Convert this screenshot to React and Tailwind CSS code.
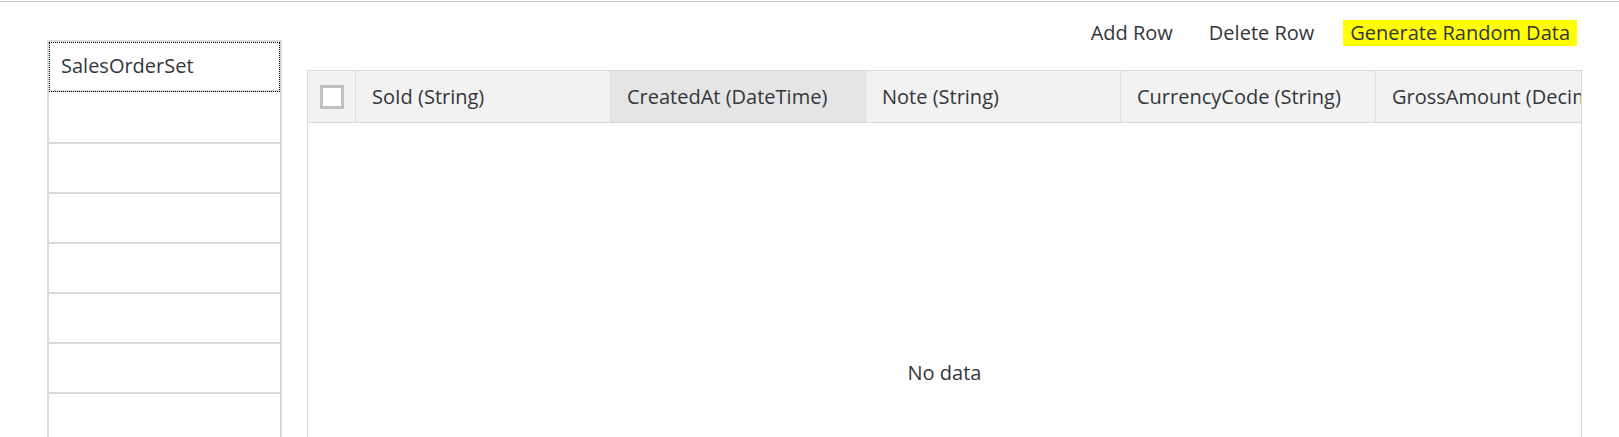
const COLUMNS = [
  { label: 'SoId (String)' },
  { label: 'CreatedAt (DateTime)', hover: true },
  { label: 'Note (String)' },
  { label: 'CurrencyCode (String)' },
  { label: 'GrossAmount (Decimal)' },
]

const ENTITY_SETS = ['SalesOrderSet', '', '', '', '', '', '', '', '']

export default function App() {
  return (
    <div
      className="h-[437px] overflow-hidden bg-white text-[20px] text-[#32363a]"
      style={{ fontFamily: '"Open Sans", "Noto Sans", Arial, sans-serif' }}
    >
      <div className="mt-px h-px bg-[#c6c6c6]" />

      <div className="flex pl-[47px]">
        {/* entity sets */}
        <div className="mt-[38px] w-[235px] shrink-0 border-2 border-[#d9d9d9]">
          {ENTITY_SETS.map((name, i) => (
            <div
              key={i}
              className={`h-[50px] border-b-2 border-[#d9d9d9] pl-[12px] flex items-center ${
                i === 0 ? 'h-[48px] border-b-0 outline-1 outline-dotted outline-black -outline-offset-1 mb-[2px]' : ''
              }`}
            >
              {name}
            </div>
          ))}
        </div>

        <div className="ml-[25px] w-[1275px] shrink-0">
          <div className="mt-[18px] flex items-center justify-end pr-[5px] leading-[26px]">
            <button type="button" className="mr-[36px]">Add Row</button>
            <button type="button" className="mr-[29px]">Delete Row</button>
            <button type="button" className="bg-[#ffff00] px-[7px]">Generate Random Data</button>
          </div>

          <div className="mt-[24px] border border-[#d9d9d9]">
            <div className="flex h-[52px] border-b border-[#d9d9d9] bg-[#f2f2f2] overflow-hidden">
              <div className="w-[48px] shrink-0 border-r border-[#dcdcdc] flex items-center justify-center">
                <div className="w-[24px] h-[24px] border-[3px] border-[#c0c0c0] bg-white" />
              </div>
              {COLUMNS.map((col) => (
                <div
                  key={col.label}
                  className={`w-[255px] shrink-0 border-r border-[#dcdcdc] pl-[16px] flex items-center whitespace-nowrap overflow-hidden ${
                    col.hover ? 'bg-[#e5e5e5]' : ''
                  }`}
                >
                  {col.label}
                </div>
              ))}
            </div>
            <div className="h-[500px] flex items-center justify-center">No data</div>
          </div>
        </div>
      </div>
    </div>
  )
}
